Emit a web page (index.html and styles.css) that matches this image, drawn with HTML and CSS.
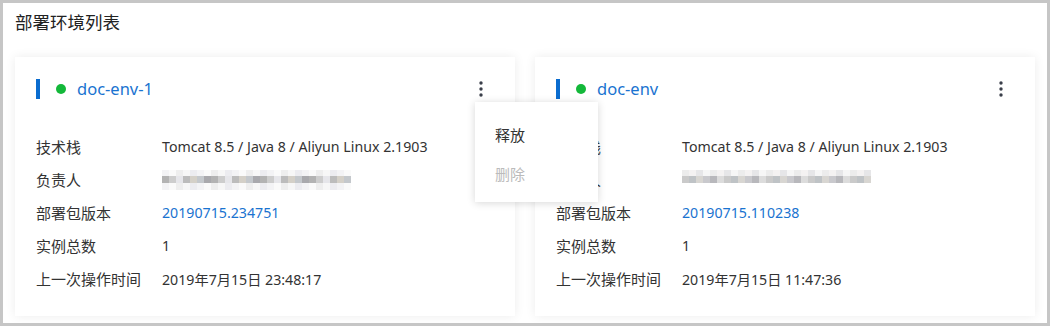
FILE: index.html
```html
<!DOCTYPE html>
<html lang="zh-CN">
<head>
    <meta charset="UTF-8">
    <title>部署环境列表</title>
    <link rel="stylesheet" href="styles.css">
</head>
<body>
<div class="page">
    <h2 class="title">部署环境列表</h2>

    <div class="cards">
        <div class="card">
            <div class="card-head">
                <span class="bar"></span>
                <span class="dot"></span>
                <a class="env-name">doc-env-1</a>
                <button class="more">
                    <svg width="4" height="16" viewBox="0 0 4 16"><circle cx="2" cy="2" r="1.7"/><circle cx="2" cy="8" r="1.7"/><circle cx="2" cy="14" r="1.7"/></svg>
                </button>
            </div>
            <dl class="info">
                <div class="row"><dt>技术栈</dt><dd>Tomcat 8.5 / Java 8 / Aliyun Linux 2.1903</dd></div>
                <div class="row"><dt>负责人</dt><dd><span class="mosaic"></span></dd></div>
                <div class="row"><dt>部署包版本</dt><dd><a class="link">20190715.234751</a></dd></div>
                <div class="row"><dt>实例总数</dt><dd>1</dd></div>
                <div class="row"><dt>上一次操作时间</dt><dd>2019年7月15日 23:48:17</dd></div>
            </dl>

            <ul class="menu">
                <li>释放</li>
                <li class="disabled">删除</li>
            </ul>
        </div>

        <div class="card">
            <div class="card-head">
                <span class="bar"></span>
                <span class="dot"></span>
                <a class="env-name">doc-env</a>
                <button class="more">
                    <svg width="4" height="16" viewBox="0 0 4 16"><circle cx="2" cy="2" r="1.7"/><circle cx="2" cy="8" r="1.7"/><circle cx="2" cy="14" r="1.7"/></svg>
                </button>
            </div>
            <dl class="info">
                <div class="row"><dt>技术栈</dt><dd>Tomcat 8.5 / Java 8 / Aliyun Linux 2.1903</dd></div>
                <div class="row"><dt>负责人</dt><dd><span class="mosaic light"></span></dd></div>
                <div class="row"><dt>部署包版本</dt><dd><a class="link">20190715.110238</a></dd></div>
                <div class="row"><dt>实例总数</dt><dd>1</dd></div>
                <div class="row"><dt>上一次操作时间</dt><dd>2019年7月15日 11:47:36</dd></div>
            </dl>
        </div>
    </div>
</div>
</body>
</html>
```

FILE: styles.css
```css
* {
    margin: 0;
    padding: 0;
    box-sizing: border-box;
}

body {
    font-family: "Noto Sans", "Noto Sans CJK SC", sans-serif;
    color: #333;
    background: #fff;
}

.page {
    width: 1050px;
    height: 326px;
    border: 3px solid #c6c6c6;
    padding: 7px 12px 0;
    overflow: hidden;
}

.title {
    font-size: 17.5px;
    font-weight: normal;
    line-height: 24px;
    color: #222;
}

.cards {
    display: flex;
    gap: 20px;
    margin-top: 23px;
}

.card {
    position: relative;
    width: 500px;
    height: 259px;
    padding: 22px 20px 21px 21px;
    background: #fff;
    box-shadow: 0 0 10px rgba(0, 0, 0, 0.08);
}

/* 카드 헤더 */
.card-head {
    display: flex;
    align-items: center;
    height: 20px;
}

.bar {
    width: 4px;
    height: 20px;
    background: #0a6ccf;
}

.dot {
    width: 10px;
    height: 10px;
    margin-left: 16px;
    border-radius: 50%;
    background: #13b83a;
}

.env-name {
    margin-left: 11px;
    font-size: 16.5px;
    line-height: 20px;
    color: #1a73d0;
}

.more {
    display: flex;
    justify-content: center;
    align-items: center;
    width: 28px;
    height: 20px;
    margin-left: auto;
    border: none;
    background: none;
    fill: #3a3f4a;
}

/* 정보 목록 */
.info {
    margin-top: 31px;
}

.row {
    display: flex;
    align-items: center;
    height: 33px;
}

.row dt {
    width: 126px;
    font-size: 15px;
}

.row dd {
    font-size: 14.2px;
}

.link {
    color: #1a73d0;
}

.mosaic {
    display: block;
    width: 189px;
    height: 20px;
    background:
        repeating-linear-gradient(90deg, #b3b3b3 0 7px, #cdcdcd 7px 14px, #e6e6ea 14px 21px, #bcbcbc 21px 28px, #d4d0c8 28px 35px, #c4c8cc 35px 42px, #a9a9ad 42px 49px) 0 6px / 100% 7px no-repeat,
        repeating-linear-gradient(90deg, #f3f3f5 0 7px, #fafafa 7px 14px, #eeeeee 14px 21px, #f7f7f7 21px 28px, #ececf0 28px 35px) 0 0 / 100% 20px no-repeat;
}

.mosaic.light {
    background:
        repeating-linear-gradient(90deg, #cacaca 0 7px, #bfc3c6 7px 14px, #d8d6d2 14px 21px, #c9c9cd 21px 28px, #b8b8bc 28px 35px, #dcdcdc 35px 42px) 0 6px / 100% 7px no-repeat,
        repeating-linear-gradient(90deg, #ececec 0 7px, #f4f2f2 7px 14px, #e6e6e8 14px 21px, #f6f6f6 21px 28px) 0 0 / 100% 7px no-repeat;
}

/* 드롭다운 메뉴 */
.menu {
    position: absolute;
    top: 45px;
    left: 460px;
    z-index: 2;
    width: 123px;
    height: 100px;
    padding-top: 14px;
    list-style: none;
    background: #fff;
    box-shadow: 0 1px 8px rgba(0, 0, 0, 0.16);
}

.menu li {
    padding-left: 20px;
    font-size: 15px;
    line-height: 39px;
    color: #333;
}

.menu li.disabled {
    color: #bbb;
}
```
